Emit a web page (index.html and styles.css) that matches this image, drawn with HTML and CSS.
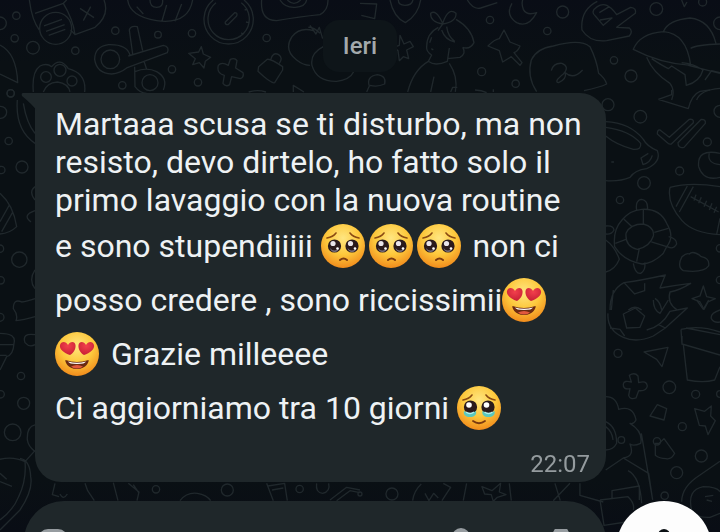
FILE: index.html
```
<!DOCTYPE html>
<html lang="it">
<head>
    <meta charset="UTF-8">
    <meta name="viewport" content="width=device-width, initial-scale=1.0">
    <title>Chat</title>
    <link rel="stylesheet" href="styles.css">
</head>
<body>

<!-- Emoji drawings -->
<svg class="sprites" aria-hidden="true">
    <defs>
        <radialGradient id="face" cx="50%" cy="32%" r="68%">
            <stop offset="0" stop-color="#ffe681"/>
            <stop offset="0.55" stop-color="#fdc83c"/>
            <stop offset="1" stop-color="#f18c1c"/>
        </radialGradient>
        <radialGradient id="heart" cx="50%" cy="30%" r="70%">
            <stop offset="0" stop-color="#f2404c"/>
            <stop offset="1" stop-color="#c81f35"/>
        </radialGradient>
    </defs>
    <symbol id="pleading" viewBox="0 0 44 44">
        <circle cx="22" cy="22" r="22" fill="url(#face)"/>
        <path d="M6 14q6-1 9-5M38 14q-6-1-9-5" fill="none" stroke="#8a4a12" stroke-width="1.6" stroke-linecap="round"/>
        <circle cx="13.500" cy="22" r="6.600" fill="#2a1a1c"/>
        <circle cx="31" cy="22" r="6.600" fill="#2a1a1c"/>
        <path d="M9 24q4 5 9 0q-1 4-4.500 4t-4.500-4M26.500 24q4 5 9 0q-1 4-4.500 4t-4.500-4" fill="#77707e"/>
        <circle cx="12" cy="19.500" r="2.600" fill="#e9e4ea"/>
        <circle cx="29.500" cy="19.500" r="2.600" fill="#e9e4ea"/>
        <circle cx="16.500" cy="24.500" r="1.300" fill="#fff"/>
        <circle cx="34" cy="24.500" r="1.300" fill="#fff"/>
        <path d="M19 36q3.500-3 7 0" fill="none" stroke="#7a3a10" stroke-width="2" stroke-linecap="round"/>
    </symbol>
    <symbol id="heart-eyes" viewBox="0 0 44 44">
        <circle cx="22" cy="22" r="22" fill="url(#face)"/>
        <path d="M15 23C9 21 4 17 5 13c1-4 6-4 8 0c2-4 7-4 7.500 0c.500 4-2 8-5.500 10z" fill="url(#heart)"/>
        <path d="M29 23c6-2 11-6 10-10c-1-4-6-4-8 0c-2-4-7-4-7.500 0c-.500 4 2 8 5.500 10z" fill="url(#heart)"/>
        <path d="M10.500 28q11.500 4 23 0c1 1-2 9-11.500 9s-12.500-8-11.500-9z" fill="#6b2a12"/>
        <path d="M13 29.500q9 2.500 18 0q-1 2.500-9 2.500t-9-2.500z" fill="#fff"/>
        <path d="M16 34.500q6-3 12 0q-2 2-6 2t-6-2z" fill="#e2583e"/>
    </symbol>
    <symbol id="tears" viewBox="0 0 44 44">
        <circle cx="22" cy="22" r="22" fill="url(#face)"/>
        <path d="M6 14q6-1 9-5M38 14q-6-1-9-5" fill="none" stroke="#8a4a12" stroke-width="1.600" stroke-linecap="round"/>
        <circle cx="13.500" cy="21" r="6.600" fill="#2a1a1c"/>
        <circle cx="31" cy="21" r="6.600" fill="#2a1a1c"/>
        <circle cx="12" cy="19" r="2.800" fill="#fff"/>
        <circle cx="29.500" cy="19" r="2.800" fill="#fff"/>
        <path d="M7 25q6.500 4 12 0c1 4-2 6-6 6s-7-2-6-6zM25.500 25q6 4 12 0c1 4-2 6-6 6s-7-2-6-6z" fill="#5cc8be"/>
        <path d="M9 26q4 3 8 0M27.500 26q4 3 8 0" fill="none" stroke="#b5f1ec" stroke-width="1.400"/>
        <path d="M16 35q6 4.500 12 0" fill="none" stroke="#7a3a10" stroke-width="1.800" stroke-linecap="round"/>
    </symbol>
</svg>

<!-- Doodle wallpaper -->
<svg class="wallpaper" viewBox="0 0 720 532" preserveAspectRatio="xMidYMid slice" aria-hidden="true">
    <!-- top left -->
    <g transform="scale(.3333)">
        <path d="M88 0Q96 62 118 90M105 40L190 10Q220 60 225 104L285 82Q330 45 312 0M190 10L200 0M225 104L212 90M240 25l42 28M272 20l-22 42M132 78l54-20M138 94l56-20M146 106l50-18"/>
        <circle cx="167" cy="85" r="48"/>
        <path d="M383 0Q390 50 470 62Q565 75 578 0M500 15l-14 48M545 12l-20 52M410 20l20 22M450 0q0 22 20 22t18-22"/>
        <path d="M640 0a74 74 0 1 0 92 0M648 8a62 62 0 1 0 76 0M676 66l28-28q10 0 6 10l-26 26q-10 0-8-8zM734 30l6-2M738 66l8 2M724 98l6 6"/>
        <path d="M785 0Q780 62 830 62Q900 50 960 44Q985 30 984 0M840 0q15 24 46 22q30-2 34-22M862 0q20 20 40 0"/>
        <path d="M390 165Q380 132 325 134Q284 140 284 178Q290 220 335 222Q360 220 380 204L502 158Q510 140 490 136L385 168M398 162L388 90Q392 76 412 80L428 152M404 200L405 260Q420 280 440 280M405 215Q440 200 470 215Q505 235 490 270M432 184l8 24"/>
        <circle cx="331" cy="178" r="28"/><circle cx="450" cy="248" r="24"/>
        <path d="M566 160l30-4l8-16l6 22l22 10l-16 12l-4 20l-14-16l-20 6l8-18zM655 196q10-12 30 0l6-18q14-6 20 4l-4 22l22 14q4 14-8 18l-26-6l-6 24q-12 8-20-4l4-24q-24-6-18-30zM776 200l26-22q10-2 46 22v10l-24 38q-10 4-50-34zM812 180q6-26 24-16q14 10 2 26"/>
        <path d="M940 92Q900 80 876 110Q850 150 890 180Q910 196 930 196M960 100Q940 80 925 82M970 140Q930 160 936 196Q950 245 1010 244Q1050 240 1062 214M930 76l18 26l10-20l10 34M0 135Q50 160 53 248L0 222"/>
        <path d="M100 276Q95 215 120 198Q140 188 155 200Q180 170 205 206Q260 220 254 276M130 276Q140 248 172 246Q205 250 210 276M746 276q26-8 52 0M880 276v-20l32 20"/>
        <circle cx="138" cy="231" r="16"/><circle cx="180" cy="211" r="18"/><circle cx="216" cy="243" r="15"/>
        <circle cx="49" cy="47" r="11"/><circle cx="44" cy="115" r="11"/><circle cx="0" cy="70" r="19"/><circle cx="99" cy="143" r="19"/><circle cx="226" cy="152" r="11"/><circle cx="346" cy="92" r="11"/><circle cx="474" cy="104" r="10"/><circle cx="576" cy="100" r="11"/><circle cx="516" cy="208" r="11"/><circle cx="367" cy="256" r="11"/><circle cx="594" cy="247" r="11"/><circle cx="800" cy="114" r="11"/><circle cx="32" cy="280" r="11"/>
    </g>
    <!-- top right -->
    <g transform="translate(360 0) scale(.3333)">
        <path d="M0 10l50 2l-6 44l-40-10M90 0Q100 50 136 68Q175 45 182 0M115 0q0 16 20 16t24-16M322 0q18 30 40 24L412 8"/>
        <path d="M248 72Q210 65 212 40Q228 26 248 70Q265 20 288 40Q290 65 248 72l-14 20M288 58Q335 85 342 128Q330 150 308 142M308 142Q320 160 300 172L262 176M235 82Q200 100 200 140Q198 155 215 165L205 184Q225 200 262 184l6-40M245 90q10 30 40 36M260 80q4 30 24 44M205 184Q160 210 143 276M268 190Q295 230 286 276M222 230l-10 46M215 112l-6 16M214 146l6 4"/>
        <path d="M120 106l12 26l18-8l10 16l-20 10l6 26l-16-6l-12 12l-4-30l-14-10l18-6zM432 90l18 36l30 12q-6 16-18 20l24 30l-6 8l-26-26l-26 16l-10-34l-34-14q20-20 34-22z"/>
        <path d="M456 10Q435 45 470 68Q505 85 530 38Q500 48 490 28Q484 12 488 0M712 4Q660 30 666 90Q690 128 740 122L808 108Q820 94 808 84L770 82L826 40Q830 24 812 22L770 44Q740 0 712 20Q690 35 706 48L730 76L756 54L720 60M718 38l30-18"/>
        <path d="M530 275Q500 230 514 180Q530 145 580 138Q660 115 690 140Q710 180 716 220Q735 235 740 252Q720 262 672 272M574 212Q580 188 606 190Q630 200 610 222Q580 246 596 248Q620 238 616 218Q640 240 668 210"/>
        <path d="M820 148Q840 100 910 95Q980 100 992 196Q900 190 820 148zM910 95Q925 60 990 54Q1050 60 1068 130M992 145Q1010 134 1080 132M860 172Q880 220 930 250Q946 270 935 300M875 176q30 20 50 30l10-8l40 26l4 32q40-10 50-46q-30-20-64-22M985 196L1080 220M1035 240l20-28l40 10M1080 265Q1020 270 1010 300"/>
        <path d="M20 276l8-18q-10-28 24-34q28 4 22 28q-22 10-44 4M345 270q20 0 35 8M400 276v-8M272 276l6-14h14"/>
        <circle cx="390" cy="60" r="11"/><circle cx="562" cy="93" r="11"/><circle cx="608" cy="36" r="18"/><circle cx="889" cy="27" r="19"/><circle cx="365" cy="215" r="12"/><circle cx="467" cy="251" r="11"/><circle cx="762" cy="181" r="11"/><circle cx="813" cy="228" r="18"/><circle cx="1080" cy="70" r="19"/><circle cx="1028" cy="6" r="12"/><path d="M965 0l8 20l8-14"/>
    </g>
    <!-- right side -->
    <g transform="translate(600 90) scale(.3333)">
        <path d="M175 28l40-14V0M175 28L265 56Q275 14 300 4L330 0M180 120l28 22l60-54q14-2 12 10l-66 64q-8 2-12-4l-30-26q0-14 8-12zM234 158l70-70q14 0 12 12l-64 72q-18 4-18-14z"/>
        <path d="M17 95Q90 98 130 148Q140 168 172 182Q185 215 140 236Q105 240 90 262Q60 275 17 272M17 112Q90 122 122 160Q125 180 100 178Q50 165 17 138M145 190l-22 14l6 20q22-6 28-28M34 216h8"/>
        <path d="M210 292Q270 275 360 290M210 292Q200 340 246 392Q280 430 360 434M238 366L280 290M228 350L262 288M272 320l84 46M288 314l-6 18M304 322l-8 18M320 332l-8 18M336 340l-8 20M350 350l-8 18M360 385l-10 48M360 190Q290 175 296 230Q310 275 360 262M328 190Q320 220 360 224"/>
        <path d="M110 362Q105 330 125 328Q146 332 142 360M126 358Q180 355 200 400Q225 440 200 470L190 490Q160 520 126 522Q70 512 44 470Q38 420 66 390Q90 360 126 358M206 440Q230 445 230 462Q220 480 202 470M100 520Q105 552 122 550Q138 540 134 518M130 358v44M72 388l24 22M205 415l-42 12M200 470l-46-14M110 515l8-40M46 460l32-12M78 430Q90 402 130 402Q165 412 160 438Q150 470 112 478Q75 470 78 430M17 408Q40 405 42 420Q34 435 17 432M17 450Q45 470 58 508Q45 540 17 546"/>
        <path d="M246 500Q260 488 268 492Q280 480 304 500Q330 505 326 528Q310 550 250 542Q230 530 246 500zM310 588l10 32l26 6l-22 10l-12 22l-12-22l-24-10l24-8z"/>
        <path d="M30 660Q30 600 72 578Q130 570 196 555L180 594Q230 585 272 580Q240 600 210 606Q200 640 232 660M72 578l32 34l30-10V580M40 600l-6 60M165 625q16 10 20 35M85 660q20-16 40 0"/>
        <circle cx="24" cy="44" r="18"/><circle cx="121" cy="80" r="19"/><circle cx="132" cy="279" r="19"/><circle cx="322" cy="156" r="12"/><circle cx="239" cy="243" r="12"/><circle cx="60" cy="330" r="11"/><circle cx="360" cy="64" r="18"/><circle cx="360" cy="475" r="11"/><circle cx="360" cy="570" r="11"/>
    </g>
    <!-- bottom right -->
    <g transform="translate(600 300) scale(.3333)">
        <path d="M24 40Q20 90 70 112Q110 130 160 108L196 84L262 24L210 34Q185 80 140 90M70 42l36-18l28 24l-14 34l-40 2zM30 84l30 4l14 20M196 84l-20-10M160 0q0 30 20 40L205 0M290 0l20 28l16-28M360 30q-30 10-26 26q8 14 26 10"/>
        <path d="M243 88Q300 75 360 96M243 88L246 132L360 165M258 84l102 20M250 134L262 240Q310 250 344 240L360 200M246 108v26M132 156l72-14l-18 58l-16-22z"/>
        <path d="M88 226q16-10 26 2l2 20q24-8 26 10q-2 16-26 14l-8 22q-18 6-22-8l4-20q-22 4-20-14q2-12 24-6zM172 314l28 12l-8 34l-42-12zM284 326l30 8l20-16l-2 30l14 14l-22 42l-8-26l-18-2zM166 430l12 0l14-14l32 44q-10 20-26 16q-20 0-32-10z"/>
        <path d="M17 290Q50 290 56 328Q100 315 108 360Q100 375 90 370Q130 395 122 430Q100 440 90 432Q105 470 70 474L146 520L158 600M124 400L158 600M70 474L17 510M17 365Q50 380 50 430Q40 450 17 450M17 380q20 15 22 40M84 512Q120 530 125 610M0 600l84-10Q105 610 100 630M36 595V572L118 558V600M0 600l12 76l66-10"/>
        <path d="M245 605Q245 560 300 525L360 484M275 630Q260 570 310 560Q350 560 360 575M275 630Q290 655 330 652L360 640M315 590l25-4M320 600l16 4"/>
        <circle cx="54" cy="160" r="12"/><circle cx="208" cy="262" r="19"/><circle cx="287" cy="283" r="12"/><circle cx="247" cy="380" r="12"/><circle cx="171" cy="424" r="11"/><circle cx="304" cy="468" r="18"/><circle cx="230" cy="518" r="18"/><circle cx="194" cy="587" r="11"/><circle cx="64" cy="420" r="10"/><circle cx="360" cy="282" r="10"/>
    </g>
    <!-- left side -->
    <g transform="translate(0 90) scale(.3333)">
        <path d="M52 30Q45 120 105 160M70 40q10 60 35 90M0 310Q40 345 50 410Q30 430 0 432M0 395L28 345M5 425l34-60M105 290q-20 15 0 40M105 362q-40 14-12 34M105 540q-20 30 0 56M105 626Q80 635 65 636Q40 625 40 656Q55 675 48 692Q70 690 105 680M105 734q-40-6-30 24q14 16 30 6M0 730Q50 730 42 760Q40 795 20 800L0 840M0 764h42M0 796h20M105 1005Q80 1010 82 1050Q85 1070 105 1085"/>
        <path d="M0 1108Q40 1098 75 1115L105 1082M60 1105Q90 1110 92 1160Q100 1200 60 1260L0 1320M75 1115Q80 1170 56 1220Q40 1260 0 1290M0 1175l36 14M0 1150l20 18"/>
        <circle cx="32" cy="10" r="11"/><circle cx="2" cy="67" r="18"/><circle cx="26" cy="153" r="11"/><circle cx="66" cy="231" r="18"/><circle cx="4" cy="240" r="11"/><circle cx="58" cy="509" r="23"/><circle cx="0" cy="476" r="11"/><circle cx="2" cy="571" r="11"/><circle cx="0" cy="682" r="12"/><circle cx="63" cy="858" r="11"/><circle cx="2" cy="913" r="11"/><circle cx="71" cy="940" r="18"/><circle cx="38" cy="1027" r="25"/>
    </g>
    <!-- strip under the message -->
    <g transform="translate(0 470) scale(.3333)">
        <path d="M165 40l-8 34l20 6M180 72q10 20 22 0M255 40l8 22l20 30M340 38l14 54M385 40l32 26l-6 26M400 44l16 24M540 92Q560 66 592 70Q620 74 632 92M800 40l20 52M804 48l50-8l8 52M816 60l34-6M990 90L1040 52L1080 60M1010 92l40-30l30 6"/>
        <circle cx="468" cy="58" r="11"/><circle cx="682" cy="60" r="18"/><circle cx="899" cy="57" r="11"/><path d="M950 40q-4 28 18 30q24-6 18-30"/>
        <circle cx="1176" cy="72" r="18"/><circle cx="1080" cy="72" r="6"/>
        <path d="M1238 92q4-30 26-50M1275 70l12 22l14-22l14 14M1330 40l22 12l-26 40M1400 40l-10 52M1446 50l30 12l26-22l-4 26l20 8l-26 8l-12 12l-6-20l-20-2zM1528 40l6 52M1665 40l16 52M1710 40l-50 52M1740 40v36l70 20"/>
    </g>
</svg>

<main class="chat">
    <div class="day">Ieri</div>

    <article class="bubble">
        <svg class="tail" viewBox="0 0 16 18" aria-hidden="true"><path d="M2 0H16V18Q12 12 1 3Q0 0 2 0z"/></svg>
        <p class="message">
            Martaaa scusa se ti disturbo, ma non<br>
            resisto, devo dirtelo, ho fatto solo il<br>
            primo lavaggio con la nuova routine<br>
            e sono stupendiiiii <svg class="emoji" role="img" aria-label="occhi lucidi"><use href="#pleading"/></svg><svg class="emoji" role="img" aria-label="occhi lucidi"><use href="#pleading"/></svg><svg class="emoji" role="img" aria-label="occhi lucidi"><use href="#pleading"/></svg> non ci<br>
            posso credere , sono riccissimii<svg class="emoji" role="img" aria-label="occhi a cuore"><use href="#heart-eyes"/></svg><br>
            <svg class="emoji" role="img" aria-label="occhi a cuore"><use href="#heart-eyes"/></svg> Grazie milleeee<br>
            Ci aggiorniamo tra 10 giorni <svg class="emoji" role="img" aria-label="lacrime di gioia"><use href="#tears"/></svg>
        </p>
        <time class="time">22:07</time>
    </article>

    <form class="composer">
        <div class="field">
            <button class="icon-btn" type="button" aria-label="Sticker">
                <svg viewBox="0 0 42 42"><rect x="8" y="3" width="26" height="34" rx="8"/></svg>
            </button>
            <input class="text" type="text" aria-label="Messaggio">
            <button class="icon-btn attach" type="button" aria-label="Allega">
                <svg viewBox="0 0 42 42"><path d="M14 32V9a7 7 0 0 1 14 0v23"/></svg>
            </button>
            <button class="icon-btn" type="button" aria-label="Fotocamera">
                <svg viewBox="0 0 42 42"><path d="M4 36V12h7l5-9h10l5 9h7v24z"/></svg>
            </button>
        </div>
        <button class="mic" type="button" aria-label="Messaggio vocale">
            <svg viewBox="0 0 42 42"><rect x="15" y="1" width="12" height="25" rx="6"/><path d="M9 20a12 12 0 0 0 24 0M21 32v6" fill="none" stroke="#0b1014" stroke-width="3"/></svg>
        </button>
    </form>
</main>

</body>
</html>
```
FILE: styles.css
```
/* Reset and basic styling */
* {
    margin: 0;
    padding: 0;
    box-sizing: border-box;
}
body {
    min-height: 100vh;
    background: linear-gradient(#090d16, #0a1014 12%, #0a1014 90%, #090d15);
    color: #eef2f4;
    font-family: Roboto, "Noto Sans", sans-serif;
    overflow: hidden;
}
button,
input {
    border: none;
    background: none;
    font: inherit;
    color: inherit;
}

.sprites {
    position: absolute;
    width: 0;
    height: 0;
}

/* Wallpaper behind the whole chat */
.wallpaper {
    position: fixed;
    top: 0;
    left: 0;
    width: 100%;
    height: 100%;
    fill: none;
    stroke: #20282c;
    stroke-width: 4;
    stroke-linejoin: round;
}

.chat {
    position: relative;
    display: flex;
    flex-direction: column;
    height: 100vh;
    padding: 20px 8px 0 24px;
    overflow: hidden;
}

/* Day label */
.day {
    align-self: center;
    margin-right: 16px;
    padding: 12px 20px;
    border-radius: 16px;
    background-color: #0e1519;
    color: #a3a9ac;
    font-size: 24px;
    font-weight: 500;
    line-height: 28px;
}

/* Message */
.bubble {
    position: relative;
    display: flex;
    flex-direction: column;
    flex-shrink: 0;
    margin: 21px 106px 0 11px;
    padding: 12px 16px 4px 20px;
    border-radius: 0 26px 26px 26px;
    background-color: #1f272a;
}
.tail {
    position: absolute;
    top: 0;
    left: -14px;
    width: 16px;
    height: 18px;
    fill: #1f272a;
}
.message {
    font-size: 32px;
    line-height: 38px;
}
.emoji {
    width: 44px;
    height: 44px;
    margin: 5px 4px 5px 0;
    vertical-align: -16px;
}
.time {
    align-self: flex-end;
    margin-top: 15px;
    color: #949b9e;
    font-size: 24px;
    line-height: 28px;
}

/* Composer, partly below the fold */
.composer {
    display: flex;
    flex-shrink: 0;
    gap: 10px;
    margin-top: 19px;
}
.field {
    display: flex;
    flex: 1;
    align-items: center;
    min-width: 0;
    height: 96px;
    padding: 0 24px 0 8px;
    border-radius: 40px;
    background-color: #1f272a;
}
.text {
    flex: 1;
    min-width: 0;
    outline: none;
    font-size: 32px;
}
.icon-btn svg {
    display: block;
    width: 42px;
    height: 42px;
    fill: none;
    stroke: #969ca0;
    stroke-width: 4;
}
.attach {
    margin-right: 58px;
}
.mic {
    display: flex;
    flex-shrink: 0;
    align-items: center;
    justify-content: center;
    width: 96px;
    height: 96px;
    border-radius: 50%;
    background-color: #fdfdfd;
}
.mic svg {
    width: 42px;
    height: 42px;
    fill: #0b1014;
}
```
